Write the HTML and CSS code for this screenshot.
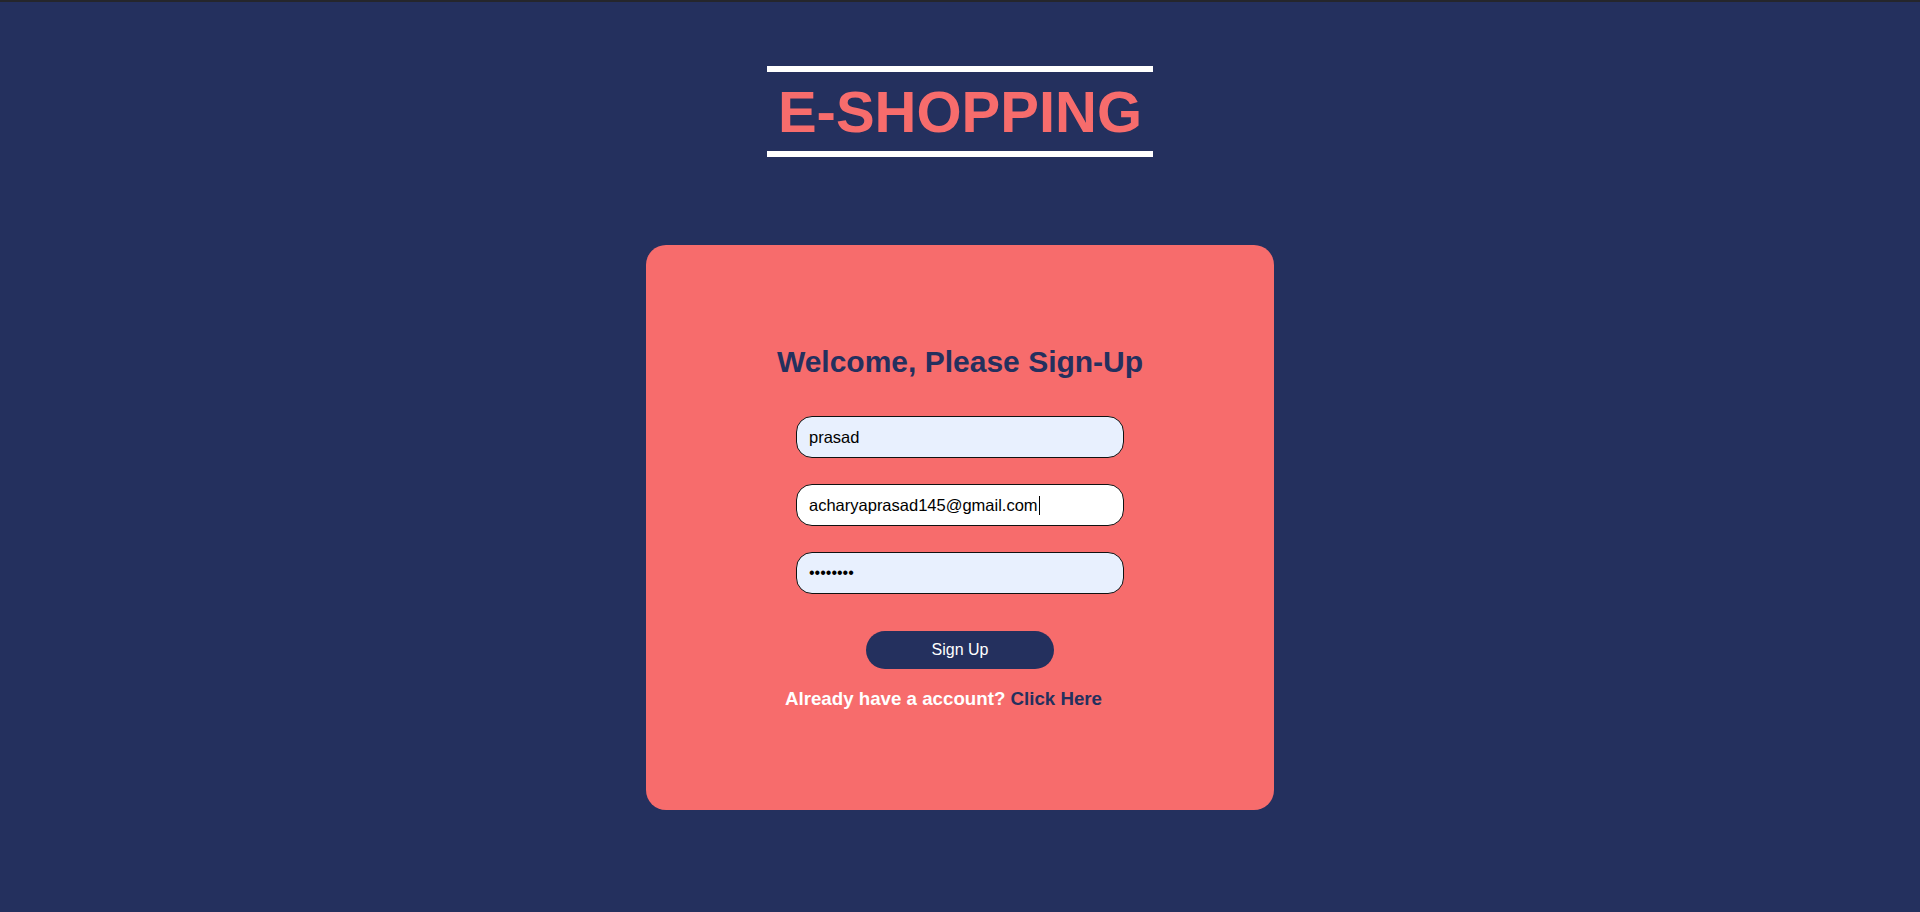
FILE: index.html
```html
<!DOCTYPE html>
<html lang="en">
<head>
<meta charset="utf-8">
<title>E-SHOPPING - Sign Up</title>
<link rel="stylesheet" href="styles.css">
</head>
<body>
<div class="topbar"></div>
<header class="brand">
  <h1 class="logo">E-SHOPPING</h1>
</header>
<main class="card">
  <h2 class="title">Welcome, Please Sign-Up</h2>
  <form class="form">
    <div class="field field-auto">prasad</div>
    <div class="field field-white"><span>acharyaprasad145@gmail.com</span><span class="caret"></span></div>
    <div class="field field-auto field-pass">&#8226;&#8226;&#8226;&#8226;&#8226;&#8226;&#8226;&#8226;</div>
    <button type="button" class="btn">Sign Up</button>
  </form>
  <h3 class="switch">Already have a account? <a href="#" class="link">Click Here</a></h3>
</main>
</body>
</html>
```
FILE: styles.css
```css
html, body {
  margin: 0;
  padding: 0;
}
body {
  background: #24305e;
  font-family: "Liberation Sans", Arial, sans-serif;
  min-height: 912px;
}
.topbar {
  height: 2px;
  background: #25262c;
}
.brand {
  display: flex;
  justify-content: center;
  padding-top: 64px;
}
.logo {
  margin: 0;
  padding: 6px 11px;
  border-top: 6px solid #ffffff;
  border-bottom: 6px solid #ffffff;
  color: #f76c6c;
  font-size: 58px;
  line-height: 67px;
  font-weight: 700;
}
.card {
  box-sizing: border-box;
  width: 628px;
  height: 565px;
  margin: 88px auto 0;
  background: #f76c6c;
  border-radius: 20px;
  display: flex;
  flex-direction: column;
  align-items: center;
  justify-content: center;
}
.title {
  margin: 0;
  color: #24305e;
  font-size: 30px;
  font-weight: 700;
}
.form {
  display: flex;
  flex-direction: column;
  align-items: center;
  margin-top: 37px;
}
.field {
  box-sizing: border-box;
  width: 328px;
  height: 42px;
  border: 1px solid #111;
  border-radius: 16px;
  padding: 0 12px;
  display: flex;
  align-items: center;
  font-size: 16.5px;
  color: #000;
  margin-bottom: 26px;
}
.field-auto {
  background: #e8f0fe;
}
.field-white {
  background: #ffffff;
}
.field-pass {
  font-size: 16px;
  margin-bottom: 37px;
}
.caret {
  display: inline-block;
  width: 1px;
  height: 19px;
  background: #000;
  margin-left: 1px;
}
.btn {
  width: 188px;
  height: 38px;
  border: none;
  border-radius: 19px;
  background: #24305e;
  color: #ffffff;
  font-family: "Liberation Sans", Arial, sans-serif;
  font-size: 16px;
  padding: 0;
}
.switch {
  margin: 19px 0 0;
  padding-right: 33px;
  color: #ffffff;
  font-size: 18.72px;
  font-weight: 700;
}
.link {
  color: #24305e;
  text-decoration: none;
}
```
